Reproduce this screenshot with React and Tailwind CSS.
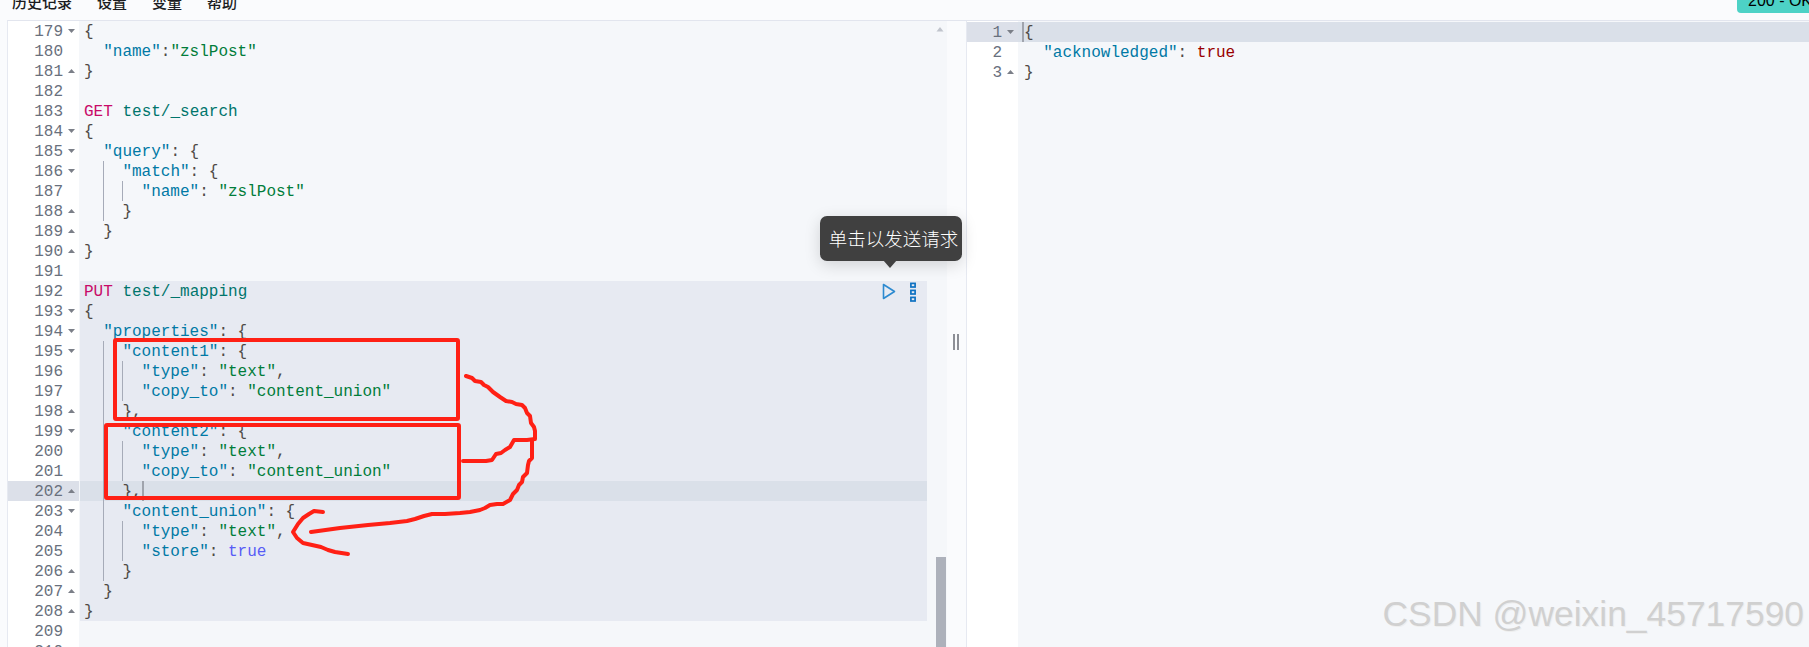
const CODE_FONT = "font-['Liberation_Mono','DejaVu_Sans_Mono',monospace]";

const T = {
  k: "text-[#0079a5]",
  s: "text-[#017d3a]",
  p: "text-[#4f4a46]",
  m: "text-[#c80a68]",
  u: "text-[#00756c]",
  b: "text-[#585cf6]",
  r: "text-[#990000]",
};

const leftLines = [
  [179, "d", 0, [["p", "{"]]],
  [180, "", 1, [["k", '"name"'], ["p", ":"], ["s", '"zslPost"']]],
  [181, "u", 0, [["p", "}"]]],
  [182, "", 0, []],
  [183, "", 0, [["m", "GET"], ["p", " "], ["u", "test/_search"]]],
  [184, "d", 0, [["p", "{"]]],
  [185, "d", 1, [["k", '"query"'], ["p", ": {"]]],
  [186, "d", 2, [["k", '"match"'], ["p", ": {"]]],
  [187, "", 3, [["k", '"name"'], ["p", ": "], ["s", '"zslPost"']]],
  [188, "u", 2, [["p", "}"]]],
  [189, "u", 1, [["p", "}"]]],
  [190, "u", 0, [["p", "}"]]],
  [191, "", 0, []],
  [192, "", 0, [["m", "PUT"], ["p", " "], ["u", "test/_mapping"]], "sel"],
  [193, "d", 0, [["p", "{"]], "sel"],
  [194, "d", 1, [["k", '"properties"'], ["p", ": {"]], "sel"],
  [195, "d", 2, [["k", '"content1"'], ["p", ": {"]], "sel"],
  [196, "", 3, [["k", '"type"'], ["p", ": "], ["s", '"text"'], ["p", ","]], "sel"],
  [197, "", 3, [["k", '"copy_to"'], ["p", ": "], ["s", '"content_union"']], "sel"],
  [198, "u", 2, [["p", "},"]], "sel"],
  [199, "d", 2, [["k", '"content2"'], ["p", ": {"]], "sel"],
  [200, "", 3, [["k", '"type"'], ["p", ": "], ["s", '"text"'], ["p", ","]], "sel"],
  [201, "", 3, [["k", '"copy_to"'], ["p", ": "], ["s", '"content_union"']], "sel"],
  [202, "u", 2, [["p", "},"]], "active"],
  [203, "d", 2, [["k", '"content_union"'], ["p", ": {"]], "sel"],
  [204, "", 3, [["k", '"type"'], ["p", ": "], ["s", '"text"'], ["p", ","]], "sel"],
  [205, "", 3, [["k", '"store"'], ["p", ": "], ["b", "true"]], "sel"],
  [206, "u", 2, [["p", "}"]], "sel"],
  [207, "u", 1, [["p", "}"]], "sel"],
  [208, "u", 0, [["p", "}"]], "sel"],
  [209, "", 0, []],
  [210, "", 0, []],
];

const rightLines = [
  [1, "d", 0, [["p", "{"]], "active"],
  [2, "", 1, [["k", '"acknowledged"'], ["p", ": "], ["r", "true"]]],
  [3, "u", 0, [["p", "}"]]],
];

function Fold({ dir }) {
  if (!dir) return <span className="w-[7px]" />;
  return (
    <svg width="7" height="4" viewBox="0 0 7 4" className="shrink-0">
      <path d={dir === "d" ? "M0 0H7L3.5 4Z" : "M0 4H7L3.5 0Z"} fill="#7b7f88" />
    </svg>
  );
}

function Indent({ level }) {
  return Array.from({ length: level }, (_, i) => (
    <span
      key={i}
      className={
        i === 0
          ? "inline-block w-[19.2px] h-5 align-top"
          : "inline-block w-[19.2px] h-5 align-top border-l border-[#a6abb8]"
      }
    />
  ));
}

function Row({ line, numW, codePl, caret, caretStart }) {
  const [num, fold, indent, tokens, state] = line;
  const gutterBg = state === "active" ? "bg-[#dce0e9]" : "bg-white";
  const codeBg =
    state === "active" ? "bg-[#dae0e9]" : state === "sel" ? "bg-[#e7eaf2]" : "";
  return (
    <div className="flex h-5">
      <div className={`flex items-center shrink-0 ${gutterBg}`}>
        <span className={`${numW} h-5 leading-[22px] text-right text-[#69707d]`}>{num}</span>
        <span className="ml-[5px] flex items-center w-[11px]">
          <Fold dir={fold} />
        </span>
      </div>
      <div className={`flex-1 h-5 leading-[22px] whitespace-pre ${codePl} ${codeBg}`}>
        {caretStart && (
          <span className="inline-block w-[2px] h-5 -ml-[2px] align-top bg-[#a0a4ad]" />
        )}
        <Indent level={indent} />
        {tokens.map(([c, t], i) => (
          <span key={i} className={T[c]}>
            {t}
          </span>
        ))}
        {caret && (
          <span className="inline-block w-[2px] h-5 align-top bg-[#a0a4ad]" />
        )}
      </div>
    </div>
  );
}

export default function App() {
  return (
    <div className="relative w-[1809px] h-[647px] overflow-hidden bg-[#fafbfd] font-['Liberation_Sans','Noto_Sans_CJK_SC',sans-serif]">
      <header className="h-5 overflow-hidden flex gap-[25px] pl-3 text-[15px] leading-5 font-medium text-[#1a1c21] font-['Noto_Sans_CJK_SC',sans-serif]">
        <span className="-mt-[8px]">历史记录</span>
        <span className="-mt-[8px]">设置</span>
        <span className="-mt-[8px]">变量</span>
        <span className="-mt-[8px]">帮助</span>
      </header>
      <div className="absolute top-0 right-0 w-[72px] h-[13px] overflow-hidden bg-[#4dd2c6] rounded-bl-[4px] pl-[11px] text-base leading-5 text-black whitespace-nowrap">
        <div className="-mt-[9px]">200 - OK</div>
      </div>

      <main className={`flex h-[627px] ml-[7px] border-t border-t-[#e2e5ee] border-l border-l-[#e6e9f1] text-base overflow-hidden ${CODE_FONT}`}>
        <section className="relative w-[939px] shrink-0 bg-[#f5f7fa] pr-[20px]">
          {leftLines.map((l) => (
            <Row key={l[0]} line={l} numW="w-[55px]" codePl="ml-[1px] pl-[4px]" caret={l[0] === 202} />
          ))}
          <svg width="10" height="6" viewBox="0 0 10 6" className="absolute right-[2px] top-[5px]">
            <path d="M1.5 5.5H8.5L5 1Z" fill="#c0c4cc" />
          </svg>
          <div className="absolute right-[1px] top-[536px] bottom-0 w-[10px] bg-[#adb1bb]" />
        </section>

        <div className="w-[20px] shrink-0 border-r border-[#e6e9f1] flex justify-center pr-[1px]">
          <div className="mt-[313px] w-[6px] h-4 border-x-2 border-[#8d8f96]" />
        </div>

        <section className="flex-1 bg-[#f5f7fa] pt-[1px] [background-image:linear-gradient(to_right,white_51px,transparent_51px)]">
          {rightLines.map((l) => (
            <Row key={l[0]} line={l} numW="w-[35px]" codePl="pl-[6px]" caretStart={l[0] === 1} />
          ))}
        </section>
      </main>

      {/* tooltip over the request actions */}
      <div className="absolute left-[820px] top-[216px] w-[142px] h-[45px] rounded-[7px] bg-[#404040] text-white text-[18.5px] font-light flex items-center justify-center pl-[5px] whitespace-nowrap shadow-[0_4px_16px_rgba(0,0,0,0.15)] font-['Noto_Sans_CJK_SC',sans-serif]">
        单击以发送请求
        <span className="absolute left-[63px] top-[44px] w-0 h-0 border-x-[7px] border-x-transparent border-t-[8px] border-t-[#404040]" />
      </div>

      {/* request action icons */}
      <svg width="14" height="17" viewBox="0 0 14 17" className="absolute left-[882px] top-[283px]">
        <path d="M1.5 1.5V15.5L12.5 8.5Z" fill="none" stroke="#2d8ad0" strokeWidth="1.6" strokeLinejoin="round" />
      </svg>
      <svg width="6" height="20" viewBox="0 0 6 20" className="absolute left-[910px] top-[282px]">
        <g fill="none" stroke="#0f72c2" strokeWidth="1.7">
          <rect x="0.9" y="1.4" width="4.2" height="3.6" />
          <rect x="0.9" y="8.4" width="4.2" height="3.6" />
          <rect x="0.9" y="15.4" width="4.2" height="3.6" />
        </g>
      </svg>

      {/* hand-drawn annotation */}
      <div className="absolute left-[113px] top-[338px] w-[347px] h-[83px] border-4 border-[#ff2015] rounded-[3px]" />
      <div className="absolute left-[104px] top-[423px] w-[357px] h-[77px] border-4 border-[#ff2015] rounded-[3px]" />
      <svg width="1809" height="647" className="absolute left-0 top-0 pointer-events-none">
        <g fill="none" stroke="#ff2015" strokeWidth="4" strokeLinejoin="round" strokeLinecap="round">
          <path d="M466 376L472 378L475 381L481 382L484 385L488 387L493 392L500 397L506 401L512 402L516 404L522 405L525 408L527 413L530 416L531 423L534 427L535 431L535 439L527 440L514 440L510 447L505 450L501 453L496 454L494 457L492 460L486 461L463 461" />
          <path d="M532 440V458L529 461L528 465L527 473L523 477L522 482L519 485L517 490L513 494L510 500L503 504L497 504L490 505L485 508L480 510L470 512L460 513L445 514L432 514L424 516L415 519L407 521L390 523L368 525L340 528L311 532" />
          <path d="M323 512L314 511L309 514L303 518L298 524L293 532L297 538L303 543L312 545L321 547L328 550L335 552L348 554" />
        </g>
      </svg>

      {/* watermark */}
      <div className="absolute right-[5px] top-[594px] text-[35.4px] leading-10 whitespace-nowrap text-[#d0d0d0] [text-shadow:1px_1px_0_#eeeeee]">
        CSDN @weixin_45717590
      </div>
    </div>
  );
}
